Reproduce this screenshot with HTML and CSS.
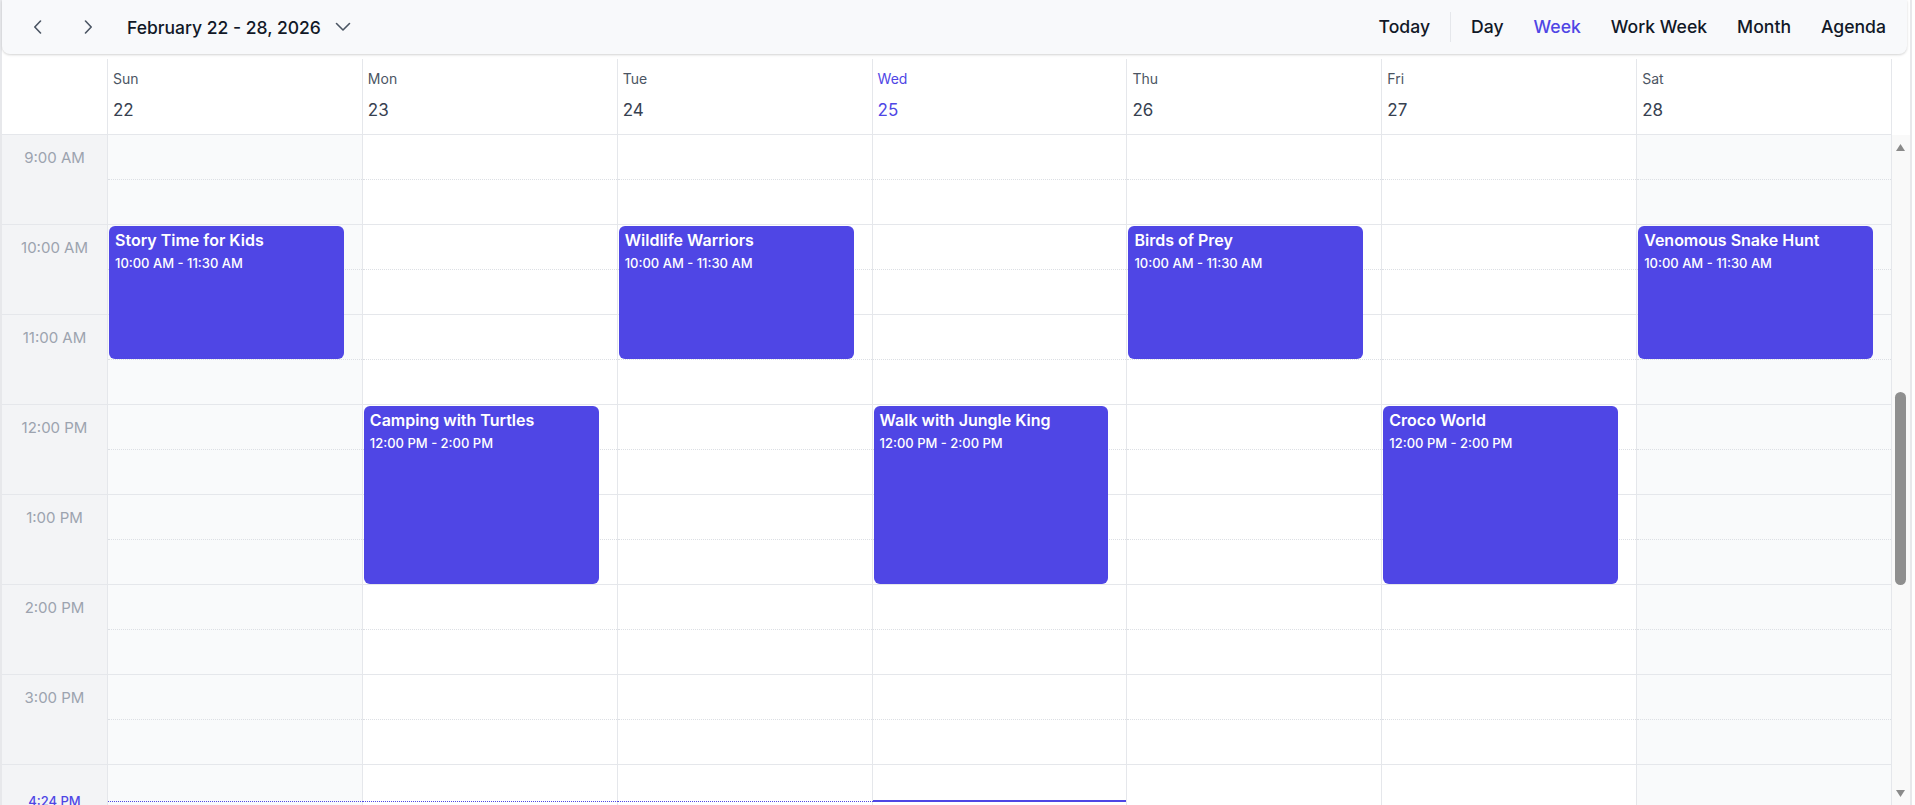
FILE: index.html
```html
<!DOCTYPE html>
<html lang="en">
  <head>
    <meta charset="UTF-8" />
    <meta name="viewport" content="width=device-width, initial-scale=1.0" />
    <title>Week</title>
    <link rel="stylesheet" href="styles.css">
  </head>
  <body>
    <div id="cal">
      <div class="toolbar">
        <div class="nav">
          <a href="javascript:;" class="arrow">
            <svg width="10" height="14" viewBox="0 0 10 14"><path d="M7.5 1 L1.8 7 L7.5 13" fill="none" stroke="#4b5563" stroke-width="1.6" stroke-linecap="round" stroke-linejoin="round"/></svg>
          </a>
          <a href="javascript:;" class="arrow">
            <svg width="10" height="14" viewBox="0 0 10 14"><path d="M2.5 1 L8.2 7 L2.5 13" fill="none" stroke="#4b5563" stroke-width="1.6" stroke-linecap="round" stroke-linejoin="round"/></svg>
          </a>
          <div class="range">
            February 22 - 28, 2026
            <svg width="16" height="10" viewBox="0 0 16 10"><path d="M1.5 1.5 L8 8 L14.5 1.5" fill="none" stroke="#4b5563" stroke-width="1.6" stroke-linecap="round" stroke-linejoin="round"/></svg>
          </div>
        </div>

        <div class="views">
          <a href="javascript:;">Today</a>
          <span class="sep"></span>
          <a href="javascript:;">Day</a>
          <a href="javascript:;" class="active">Week</a>
          <a href="javascript:;">Work Week</a>
          <a href="javascript:;">Month</a>
          <a href="javascript:;">Agenda</a>
        </div>
      </div>

      <div class="head">
        <div class="corner"></div>
        <div class="dh"><p>Sun</p><b>22</b></div>
        <div class="dh"><p>Mon</p><b>23</b></div>
        <div class="dh"><p>Tue</p><b>24</b></div>
        <div class="dh today"><p>Wed</p><b>25</b></div>
        <div class="dh"><p>Thu</p><b>26</b></div>
        <div class="dh"><p>Fri</p><b>27</b></div>
        <div class="dh"><p>Sat</p><b>28</b></div>
      </div>

      <div class="main">
        <div class="body">
          <div class="grid">
            <div class="times"></div>
            <div class="day weekend"></div>
            <div class="day"></div>
            <div class="day"></div>
            <div class="day"></div>
            <div class="day"></div>
            <div class="day"></div>
            <div class="day weekend"></div>
          </div>
        </div>

        <div class="scrollbar">
          <span class="btn">
            <svg width="18" height="24" viewBox="0 0 18 24"><path d="M4 16 L13 16 L8.5 9 Z" fill="#8a8a8a"/></svg>
          </span>
          <div class="track"><div class="thumb"></div></div>
          <span class="btn">
            <svg width="18" height="24" viewBox="0 0 18 24"><path d="M4 9 L13 9 L8.5 16 Z" fill="#8a8a8a"/></svg>
          </span>
        </div>
      </div>
    </div>

    <script>
      let oBody = document.querySelector("#cal .body"),
        oTimes = document.querySelector("#cal .times"),
        aDay = document.querySelectorAll("#cal .day"),
        oTrack = document.querySelector("#cal .track"),
        oThumb = document.querySelector("#cal .thumb");

      // one hour = 90px
      let hour = 90;

      let events = [
        { day: 0, title: "Story Time for Kids", start: 10, end: 11.5 },
        { day: 2, title: "Wildlife Warriors", start: 10, end: 11.5 },
        { day: 4, title: "Birds of Prey", start: 10, end: 11.5 },
        { day: 6, title: "Venomous Snake Hunt", start: 10, end: 11.5 },
        { day: 1, title: "Camping with Turtles", start: 12, end: 14 },
        { day: 3, title: "Walk with Jungle King", start: 12, end: 14 },
        { day: 5, title: "Croco World", start: 12, end: 14 }
      ];

      // current time 4:24 PM, today = Wed
      let now = 16 + 24 / 60,
        today = 3;

      function fmt(t) {
        let h = Math.floor(t),
          m = Math.round((t - h) * 60);
        return (h % 12 || 12) + ":" + (m < 10 ? "0" : "") + m + " " + (h < 12 ? "AM" : "PM");
      }

      let html = "";
      for (let h = 0; h < 24; h++) {
        // hide the hour label that sits under the now label
        let label = Math.abs(now - h) < 0.5 ? "" : fmt(h);
        html += '<div class="slot"><div class="half">' + label + '</div><div class="half"></div></div>';
      }
      html += '<span class="now-label" style="top:' + now * hour + 'px">' + fmt(now) + "</span>";
      oTimes.innerHTML = html;

      aDay.forEach(function (oDay, i) {
        let s = "";
        for (let h = 0; h < 24; h++) {
          s += '<div class="slot"><div class="half"></div><div class="half"></div></div>';
        }
        if (i <= today) {
          s += '<div class="now-line' + (i == today ? " cur" : "") + '" style="top:' + now * hour + 'px"></div>';
        }
        oDay.innerHTML = s;
      });

      events.forEach(function (e) {
        let top = e.start * hour + 1,
          height = (e.end - e.start) * hour - 2;
        aDay[e.day].innerHTML +=
          '<div class="event" style="top:' + top + "px;height:" + height + 'px">' +
          "<h4>" + e.title + "</h4>" +
          "<p>" + fmt(e.start) + " - " + fmt(e.end) + "</p></div>";
      });

      // thumb follows the scroll position
      function syncThumb() {
        let track = oTrack.clientHeight,
          th = (track * oBody.clientHeight) / oBody.scrollHeight,
          max = oBody.scrollHeight - oBody.clientHeight;
        oThumb.style.height = th + "px";
        oThumb.style.marginTop = ((track - th) * oBody.scrollTop) / max + "px";
      }

      oBody.onscroll = syncThumb;

      // start the view at 9:00 AM
      oBody.scrollTop = 9 * hour;
      syncThumb();
    </script>
  </body>
</html>
```

FILE: styles.css
```css
* {
  margin: 0;
  padding: 0;
  box-sizing: border-box;
}

body {
  font-family: Inter, "Noto Sans", sans-serif;
  color: #111827;
  background-color: #fff;
}

#cal {
  display: flex;
  flex-direction: column;
  width: calc(100% - 3px);
  height: 100vh;
  border-left: 2px solid #e7e8eb;
  border-right: 2px solid #e7e8eb;
}

/* toolbar */
#cal .toolbar {
  position: relative;
  z-index: 2;
  flex: none;
  display: flex;
  justify-content: space-between;
  align-items: center;
  height: 54px;
  margin-right: 3px;
  padding: 0 6px 0 20px;
  background-color: #f8f9fb;
  border-radius: 0 0 8px 8px;
  box-shadow: 0 1px 3px rgba(0, 0, 0, 0.12), 0 1px 2px rgba(0, 0, 0, 0.06);
}

#cal .nav {
  display: flex;
  align-items: center;
}

#cal .nav .arrow {
  display: flex;
  justify-content: center;
  align-items: center;
  width: 32px;
  height: 32px;
  margin-right: 18px;
}

#cal .nav .arrow + .arrow {
  margin-right: 0;
}

#cal .range {
  display: flex;
  align-items: center;
  margin-left: 23px;
  font-size: 17.5px;
  font-weight: 500;
  color: #111827;
}

#cal .range svg {
  margin-left: 14px;
}

#cal .views {
  display: flex;
  align-items: center;
}

#cal .views a {
  padding: 0 15px;
  font-size: 17.6px;
  font-weight: 500;
  line-height: 30px;
  color: #111827;
  text-decoration: none;
}

#cal .views a.active {
  color: #4f46e5;
}

#cal .views .sep {
  width: 1px;
  height: 30px;
  margin: 0 5px;
  background-color: #e5e7eb;
}

/* day header */
#cal .head {
  flex: none;
  display: flex;
  height: 76px;
  margin: 5px 18px 0 0;
  border-bottom: 1px solid #e5e7eb;
}

#cal .head .corner {
  flex: none;
  width: 106px;
  border-right: 1px solid #e5e7eb;
}

#cal .head .dh {
  flex: 1;
  padding: 10px 5px 0;
  border-right: 1px solid #e5e7eb;
}

#cal .head .dh p {
  font-size: 14px;
  line-height: 20px;
  color: #4b5563;
}

#cal .head .dh b {
  display: block;
  margin-top: 10px;
  font-size: 17px;
  font-weight: 400;
  line-height: 22px;
  color: #374151;
}

#cal .head .dh.today p,
#cal .head .dh.today b {
  color: #4f46e5;
}

/* grid + scrollbar */
#cal .main {
  flex: 1;
  display: flex;
  min-height: 0;
}

#cal .body {
  flex: 1;
  overflow-y: scroll;
  scrollbar-width: none;
}

#cal .body::-webkit-scrollbar {
  display: none;
}

#cal .grid {
  display: flex;
}

#cal .times {
  position: relative;
  flex: none;
  width: 106px;
  background-color: #f3f4f6;
  border-right: 1px solid #e5e7eb;
}

#cal .day {
  position: relative;
  flex: 1;
  border-right: 1px solid #e5e7eb;
}

#cal .day.weekend {
  background-color: #f9fafb;
}

#cal .slot {
  height: 90px;
}

#cal .slot .half {
  height: 45px;
  border-bottom: 1px dotted #dcdfe4;
}

#cal .slot .half + .half {
  border-bottom: 1px solid #e5e7eb;
}

#cal .times .slot .half:first-child {
  display: flex;
  justify-content: center;
  align-items: center;
  border-bottom: none;
  font-size: 15px;
  color: #9ca3af;
}

/* events */
#cal .event {
  position: absolute;
  left: 1px;
  right: 18px;
  padding: 4px 6px;
  background-color: #4f46e5;
  border-radius: 6px;
  color: #fff;
  overflow: hidden;
}

#cal .event h4 {
  font-size: 16px;
  font-weight: 600;
  line-height: 20px;
  white-space: nowrap;
}

#cal .event p {
  margin-top: 4px;
  font-size: 13px;
  font-weight: 500;
  line-height: 18px;
}

/* now indicator */
#cal .now-label {
  position: absolute;
  left: 0;
  right: 0;
  transform: translateY(-50%);
  font-size: 13px;
  font-weight: 500;
  line-height: 16px;
  text-align: center;
  color: #4f46e5;
}

#cal .now-line {
  position: absolute;
  left: 0;
  right: -1px;
  border-top: 1px dotted #4f46e5;
}

#cal .now-line.cur {
  right: 0;
  margin-top: -1px;
  border-top: 2px solid #4f46e5;
}

/* scrollbar */
#cal .scrollbar {
  flex: none;
  display: flex;
  flex-direction: column;
  width: 18px;
  background-color: #f9f9f9;
}

#cal .scrollbar .btn {
  display: block;
  height: 24px;
}

#cal .scrollbar .btn svg {
  display: block;
}

#cal .track {
  flex: 1;
  min-height: 0;
}

#cal .thumb {
  width: 11px;
  margin-left: 3px;
  background-color: #8f8f8f;
  border-radius: 6px;
}
```
